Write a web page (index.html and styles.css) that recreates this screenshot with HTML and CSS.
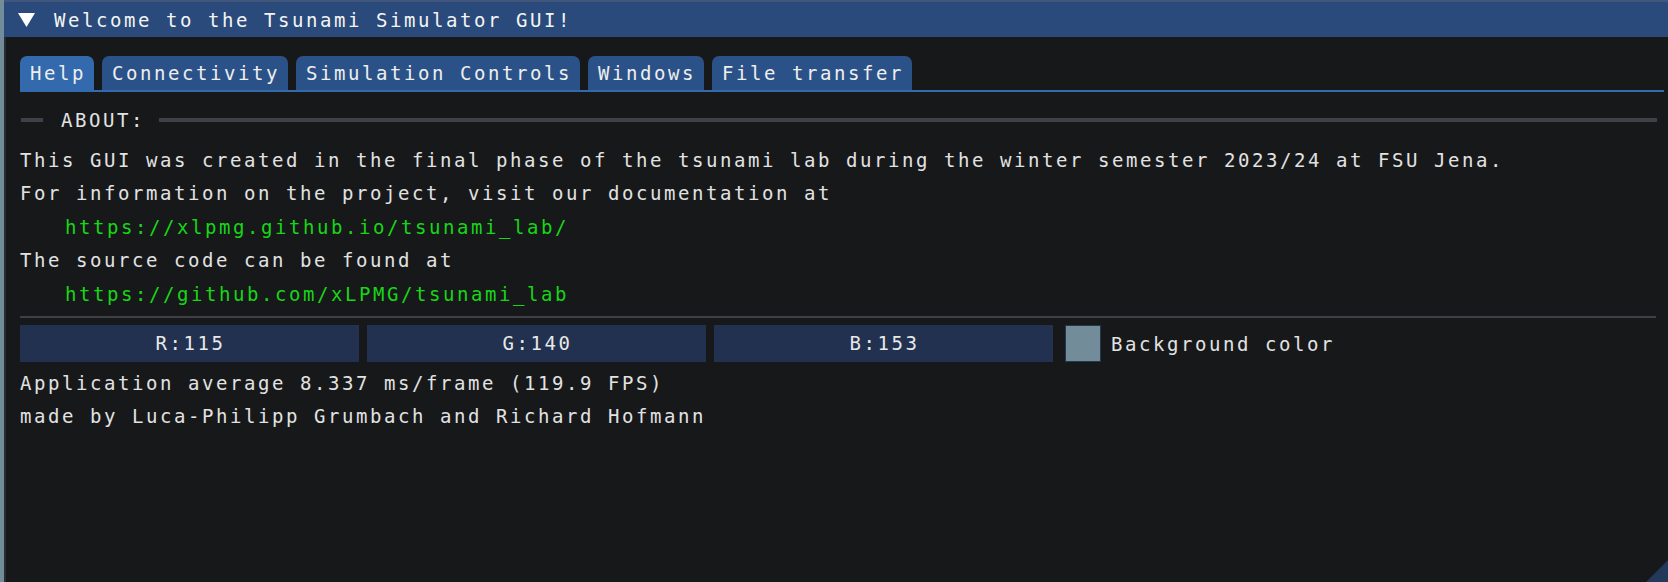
FILE: index.html
```html
<!DOCTYPE html>
<html>
<head>
<meta charset="utf-8">
<link rel="stylesheet" href="styles.css">
</head>
<body>
<div class="window">
  <div class="titlebar">
    <svg class="arrow" width="17" height="14" viewBox="0 0 17 14"><polygon points="0,0 17,0 8.5,14" fill="#ffffff"/></svg>
    <span class="title">Welcome to the Tsunami Simulator GUI!</span>
  </div>
  <div class="content">
    <div class="tabbar">
      <div class="tab active help">Help</div>
      <div class="tab">Connectivity</div>
      <div class="tab">Simulation Controls</div>
      <div class="tab">Windows</div>
      <div class="tab">File transfer</div>
    </div>
    <div class="tabline"></div>
    <div class="septext">
      <span class="sepline short"></span>
      <span class="seplabel">ABOUT:</span>
      <span class="sepline long"></span>
    </div>
    <div class="line">This GUI was created in the final phase of the tsunami lab during the winter semester 2023/24 at FSU Jena.</div>
    <div class="line">For information on the project, visit our documentation at</div>
    <div class="line link">https://xlpmg.github.io/tsunami_lab/</div>
    <div class="line">The source code can be found at</div>
    <div class="line link">https://github.com/xLPMG/tsunami_lab</div>
    <div class="separator"></div>
    <div class="colorrow">
      <div class="slider">R:115</div>
      <div class="slider">G:140</div>
      <div class="slider">B:153</div>
      <div class="swatch"></div>
      <div class="swatchlabel">Background color</div>
    </div>
    <div class="line">Application average 8.337 ms/frame (119.9 FPS)</div>
    <div class="line">made by Luca-Philipp Grumbach and Richard Hofmann</div>
  </div>
  <svg class="grip" width="22" height="22" viewBox="0 0 22 22"><polygon points="22,0 22,22 0,22" fill="#23395a"/></svg>
</div>
</body>
</html>
```
FILE: styles.css
```css
html, body {
  margin: 0;
  padding: 0;
}
body {
  background: #738c99;
  width: 1668px;
  height: 582px;
  overflow: hidden;
  display: flex;
  padding-left: 4px;
  box-sizing: border-box;
  font-family: "DejaVu Sans Mono", "Liberation Mono", monospace;
  font-size: 19px;
  letter-spacing: 2.56px;
  color: #e2e2e2;
}
.window {
  position: relative;
  flex: 1;
  height: 582px;
  background: #17181a;
  display: flex;
  flex-direction: column;
}
.titlebar {
  height: 35px;
  border-top: 2px solid #42557a;
  background: #294a7a;
  display: flex;
  align-items: center;
  padding-left: 14px;
  color: #f4f4f4;
}
.arrow {
  margin-right: 19px;
}
.content {
  flex: 1;
  border-left: 2px solid #2b2c30;
  padding: 19px 12px 0 14px;
}
.tabbar {
  display: flex;
  gap: 8px;
  height: 34px;
}
.tab {
  height: 34px;
  line-height: 35px;
  padding: 0 8px 0 10px;
  background: #2b5288;
  border-radius: 7px 7px 0 0;
  color: #eeeeee;
}
.tab.active {
  background: #3369ad;
}
.tab.help {
  padding: 0 8px 0 10px;
}
.tabline {
  height: 2px;
  background: #3369ad;
  margin-right: -8px;
}
.septext {
  display: flex;
  align-items: center;
  height: 33.5px;
  margin-top: 11px;
  margin-bottom: 7px;
}
.sepline {
  height: 4px;
  background: #404148;
}
.sepline.short {
  width: 22px;
  margin-left: 1px;
}
.seplabel {
  margin: 0 14px 0 18px;
}
.sepline.long {
  flex: 1;
  margin-right: -1px;
}
.line {
  height: 33.5px;
  line-height: 33.5px;
  white-space: pre;
}
.link {
  padding-left: 45px;
  color: #16d616;
}
.separator {
  height: 2px;
  background: #3f4045;
  margin-top: 4.5px;
}
.colorrow {
  display: flex;
  align-items: center;
  margin-top: 7.5px;
  margin-bottom: 4.5px;
  height: 37px;
}
.slider {
  width: 339px;
  height: 37px;
  line-height: 37px;
  margin-right: 8px;
  background: #21314f;
  text-align: center;
  text-indent: 2px;
  color: #e8e8e8;
}
.swatch {
  width: 34px;
  height: 35px;
  margin-left: 4px;
  background: #738c99;
  border: 1px solid #26364e;
}
.swatchlabel {
  margin-left: 10px;
}
.grip {
  position: absolute;
  right: 0;
  bottom: 0;
}
```
